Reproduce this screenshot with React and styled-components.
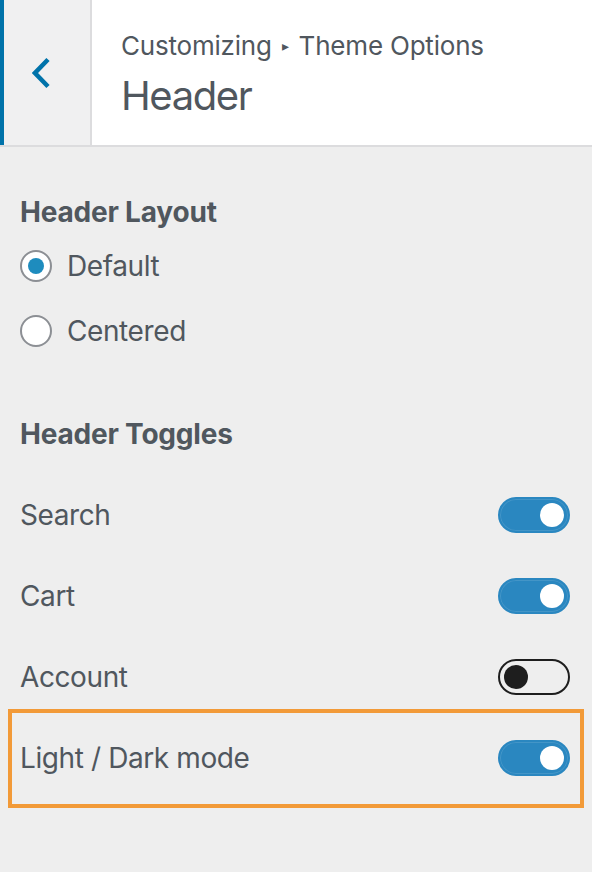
import React from "react";
import styled, { createGlobalStyle } from "styled-components";

const Global = createGlobalStyle`
  html, body { margin: 0; padding: 0; background: #eeeeee; }
  body { font-family: Inter, "Noto Sans", sans-serif; color: #50575e; }
  * { box-sizing: border-box; }
`;

const Page = styled.div`
  width: 592px;
  min-height: 872px;
  background: #eeeeee;
`;

const Header = styled.header`
  display: flex;
  height: 147px;
  background: #ffffff;
  border-bottom: 2px solid #dcdcde;
`;

const BackButton = styled.button`
  display: flex;
  align-items: center;
  width: 92px;
  padding: 0 0 0 28px;
  margin: 0;
  background: #f0f0f1;
  border: none;
  border-left: 4px solid #0073aa;
  border-right: 2px solid #dcdcde;
  cursor: pointer;
`;

const TitleBlock = styled.div`
  display: flex;
  flex-direction: column;
  padding: 30px 0 0 29px;
`;

const Breadcrumb = styled.div`
  font-size: 26px;
  line-height: 32px;
  letter-spacing: -0.2px;
  color: #50575e;
  display: flex;
  align-items: center;
  gap: 10px;
`;

const Arrow = styled.span`
  font-size: 14px;
  color: #50575e;
`;

const Title = styled.h1`
  margin: 10px 0 0;
  font-size: 40px;
  line-height: 48px;
  font-weight: 400;
  letter-spacing: -1.4px;
  color: #50575e;
`;

const Body = styled.main`
  padding: 47px 22px 0 20px;
  display: flex;
  flex-direction: column;
`;

const SectionTitle = styled.h2`
  margin: 0;
  font-size: 28px;
  line-height: 36px;
  font-weight: 700;
  letter-spacing: -0.2px;
  color: #50575e;
  margin-top: ${(p) => p.$top || 0}px;
`;

const RadioList = styled.div`
  display: flex;
  flex-direction: column;
  gap: 33px;
  margin-top: 20px;
`;

const RadioRow = styled.label`
  display: flex;
  align-items: center;
  gap: 15px;
  height: 32px;
  font-size: 28px;
  letter-spacing: -0.4px;
  color: #50575e;
`;

const RadioCircle = styled.span`
  width: 32px;
  height: 32px;
  border-radius: 50%;
  border: 2px solid #8c8f94;
  background: #ffffff;
  display: flex;
  align-items: center;
  justify-content: center;
  flex: none;
  &::after {
    content: "";
    width: 16px;
    height: 16px;
    border-radius: 50%;
    background: ${(p) => (p.$checked ? "#1e8cbe" : "transparent")};
  }
`;

const ToggleList = styled.div`
  display: flex;
  flex-direction: column;
  gap: 45px;
  margin-top: 45px;
`;

const ToggleRow = styled.div`
  display: flex;
  align-items: center;
  justify-content: space-between;
  height: 36px;
  font-size: 28px;
  letter-spacing: -0.4px;
  color: #50575e;
`;

const Highlight = styled.div`
  margin: -31px -14px 0 -12px;
  padding: 27px 10px 28px 8px;
  border: 4px solid #f29a38;
`;

const Toggle = styled.span`
  width: 72px;
  height: 36px;
  border-radius: 18px;
  display: flex;
  align-items: center;
  padding: 0 4px;
  justify-content: ${(p) => (p.$on ? "flex-end" : "flex-start")};
  background: ${(p) => (p.$on ? "#2a87c0" : "transparent")};
  border: 2px solid ${(p) => (p.$on ? "#2a87c0" : "#1e1e1e")};
  box-shadow: ${(p) => (p.$on ? "inset 0 0 0 1px rgba(255,255,255,0.12)" : "none")};
  flex: none;
  &::after {
    content: "";
    width: 24px;
    height: 24px;
    border-radius: 50%;
    background: ${(p) => (p.$on ? "#ffffff" : "#1e1e1e")};
  }
`;

const toggles = [
  { label: "Search", on: true },
  { label: "Cart", on: true },
  { label: "Account", on: false },
];

export default function App() {
  return (
    <Page>
      <Global />
      <Header>
        <BackButton aria-label="Back">
          <svg width="20" height="32" viewBox="0 0 20 32">
            <polyline
              points="16,2.5 3,16 16,29.5"
              fill="none"
              stroke="#0073aa"
              strokeWidth="4.5"
            />
          </svg>
        </BackButton>
        <TitleBlock>
          <Breadcrumb>
            Customizing <Arrow>▸</Arrow> Theme Options
          </Breadcrumb>
          <Title>Header</Title>
        </TitleBlock>
      </Header>
      <Body>
        <SectionTitle>Header Layout</SectionTitle>
        <RadioList>
          <RadioRow>
            <RadioCircle $checked />
            Default
          </RadioRow>
          <RadioRow>
            <RadioCircle />
            Centered
          </RadioRow>
        </RadioList>
        <SectionTitle $top={69}>Header Toggles</SectionTitle>
        <ToggleList>
          {toggles.map((t) => (
            <ToggleRow key={t.label}>
              {t.label}
              <Toggle $on={t.on} />
            </ToggleRow>
          ))}
          <Highlight>
            <ToggleRow>
              Light / Dark mode
              <Toggle $on />
            </ToggleRow>
          </Highlight>
        </ToggleList>
      </Body>
    </Page>
  );
}
